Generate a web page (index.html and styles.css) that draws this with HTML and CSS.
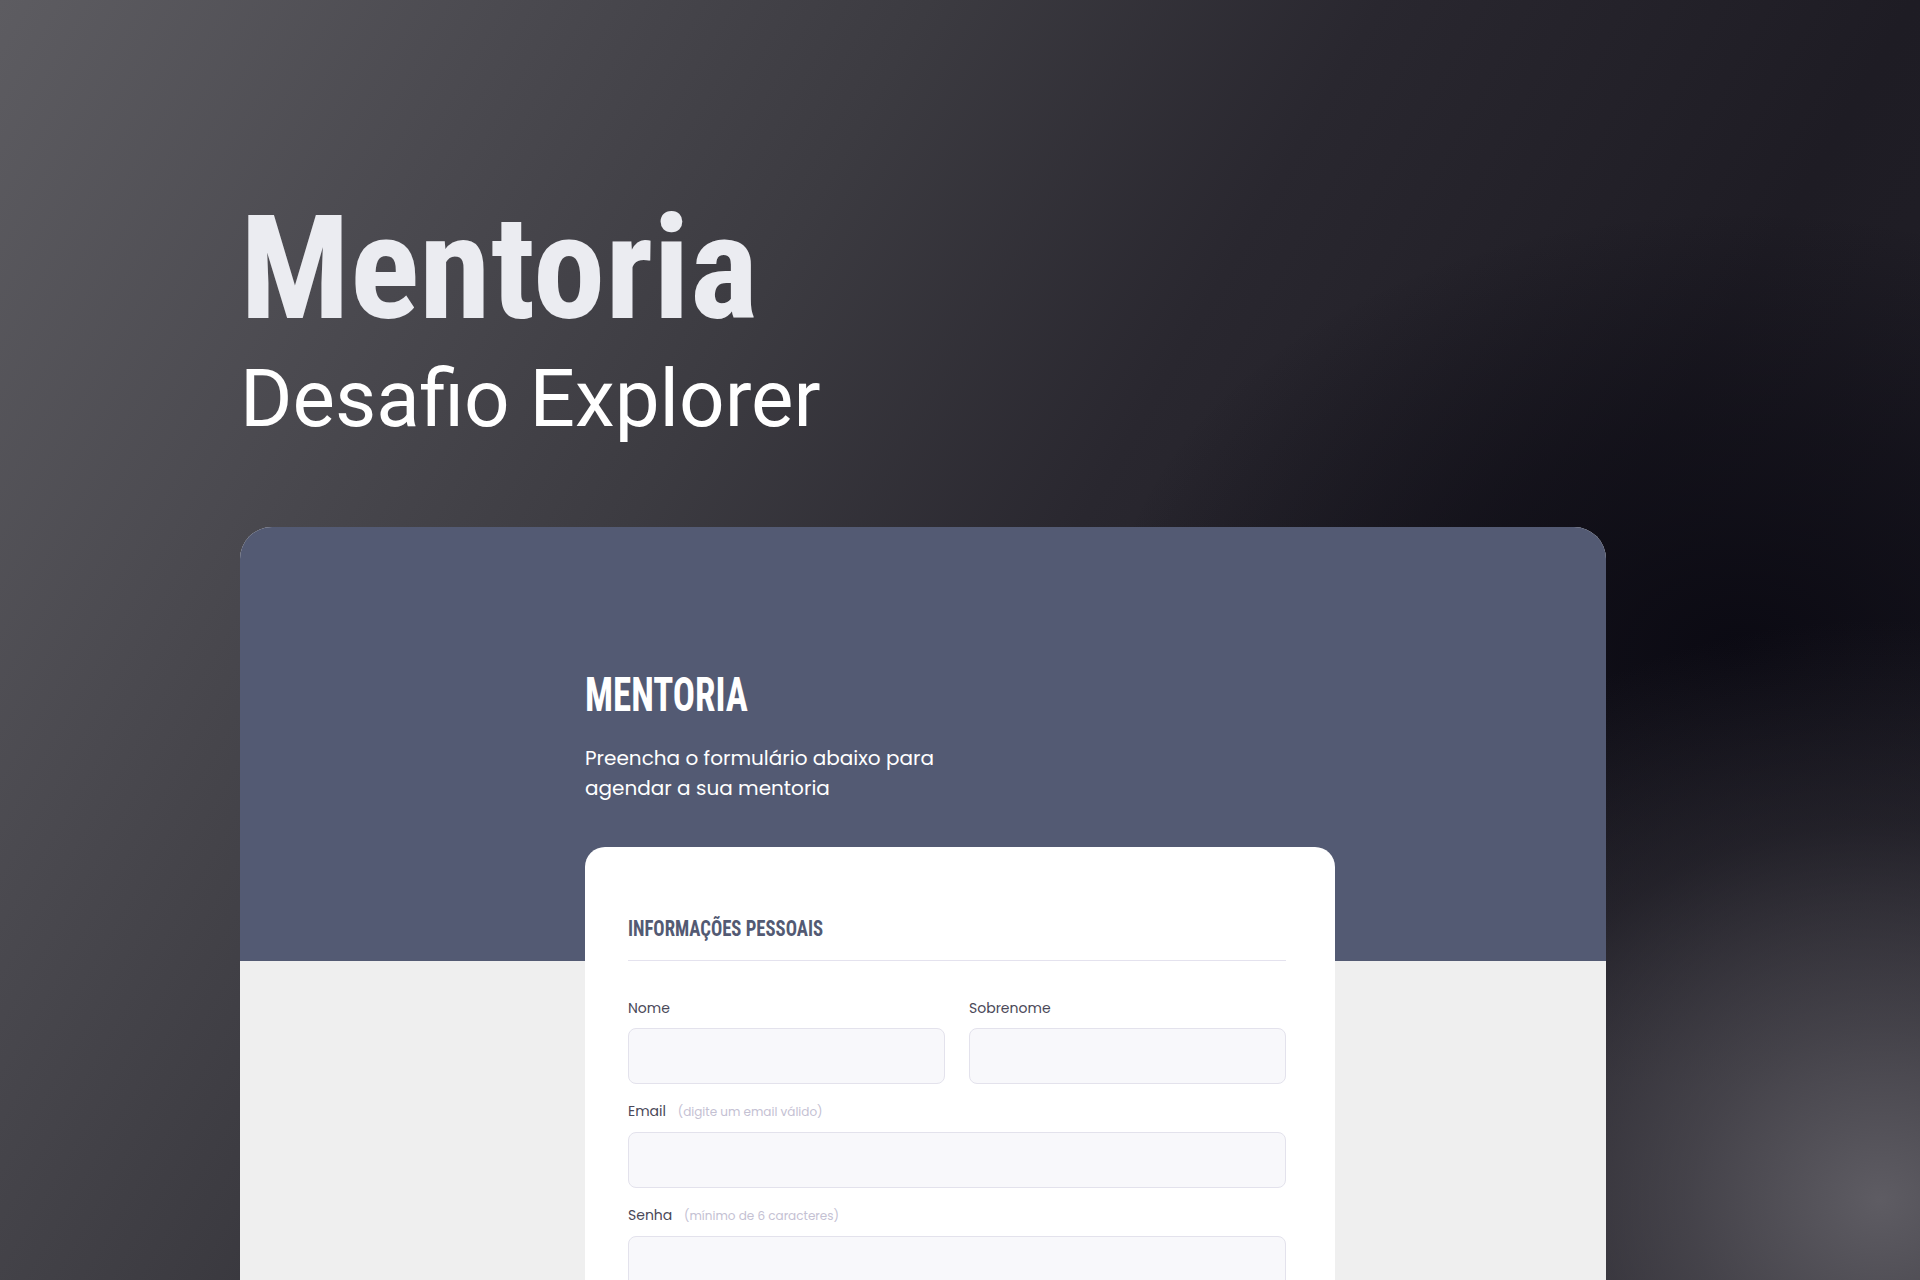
FILE: index.html
```html
<!DOCTYPE html>
<html lang="pt-BR">
<head>
<meta charset="utf-8">
<title>Mentoria - Desafio Explorer</title>
<link rel="stylesheet" href="styles.css">
</head>
<body>
<main class="stage">
  <header class="hero">
    <h1 class="hero-title">Mentoria</h1>
    <p class="hero-sub">Desafio Explorer</p>
  </header>

  <section class="frame">
    <div class="frame-top">
      <div class="intro">
        <h2 class="brand"><span class="squeeze">MENTORIA</span></h2>
        <p class="lead">Preencha o formulário abaixo para<br>agendar a sua mentoria</p>
      </div>
    </div>
    <div class="frame-bottom">
      <form class="form-card">
        <h3 class="section-title"><span class="squeeze">INFORMAÇÕES PESSOAIS</span></h3>
        <div class="fields">
          <div class="row two">
            <label class="field">
              <span class="label">Nome</span>
              <span class="input"></span>
            </label>
            <label class="field">
              <span class="label">Sobrenome</span>
              <span class="input"></span>
            </label>
          </div>
          <label class="field">
            <span class="label">Email <small class="hint">(digite um email válido)</small></span>
            <span class="input"></span>
          </label>
          <label class="field">
            <span class="label">Senha <small class="hint">(mínimo de 6 caracteres)</small></span>
            <span class="input"></span>
          </label>
        </div>
      </form>
    </div>
  </section>
</main>
</body>
</html>
```

FILE: styles.css
```css
* { box-sizing: border-box; margin: 0; padding: 0; }

html, body {
  width: 1920px;
  height: 1280px;
  overflow: hidden;
}

body {
  background:
    radial-gradient(ellipse 640px 580px at 1880px 1200px, rgba(94, 92, 99, 1) 0%, rgba(80, 78, 85, 0.75) 30%, rgba(62, 60, 67, 0.35) 65%, rgba(50, 48, 56, 0) 100%),
    radial-gradient(ellipse 640px 440px at 1740px 650px, rgba(10, 9, 18, 0.95) 0%, rgba(10, 9, 18, 0.55) 50%, rgba(10, 9, 18, 0) 100%),
    linear-gradient(120deg, #5d5c61 0%, #4a494f 20%, #3c3b41 35%, #29272f 52%, #1e1c24 72%, #24222a 100%);
  font-family: "Poppins", "Open Sans", sans-serif;
}

.stage {
  padding-left: 240px;
  padding-top: 196px;
}

.hero-title {
  font-family: "Roboto Condensed", "Roboto", sans-serif;
  font-stretch: condensed;
  font-weight: 700;
  font-size: 145px;
  line-height: 1;
  color: #ebecf1;
}

.hero-sub {
  font-family: "Roboto", sans-serif;
  font-weight: 400;
  font-size: 80px;
  line-height: 1;
  color: #ffffff;
  margin-top: 18px;
}

.frame {
  margin-top: 88px;
  width: 1366px;
  height: 760px;
  border-radius: 32px 32px 0 0;
  overflow: hidden;
  background: #efefef;
  display: flex;
  flex-direction: column;
}

.frame-top {
  background: #535a73;
  height: 434px;
  flex: none;
  padding: 144px 0 0 345px;
}

.squeeze {
  display: inline-block;
  transform-origin: left center;
}

.brand {
  font-family: "Roboto Condensed", "Roboto", sans-serif;
  font-stretch: condensed;
  font-weight: 700;
  font-size: 48px;
  line-height: 1;
  color: #ffffff;
  height: 48px;
}

.brand .squeeze { transform: scaleX(0.77); }

.lead {
  margin-top: 24px;
  font-size: 20px;
  line-height: 30px;
  color: #ffffff;
}

.frame-bottom {
  position: relative;
  flex: 1;
}

.form-card {
  position: absolute;
  left: 345px;
  top: -114px;
  width: 750px;
  height: 600px;
  background: #ffffff;
  border-radius: 20px;
  padding: 70px 49px 0 43px;
}

.section-title {
  font-family: "Roboto Condensed", "Roboto", sans-serif;
  font-stretch: condensed;
  font-weight: 700;
  font-size: 22.5px;
  line-height: 1;
  color: #535a73;
  padding-bottom: 20px;
  border-bottom: 1px solid #e4e2ee;
}

.section-title .squeeze { transform: scaleX(0.83); }

.fields {
  display: flex;
  flex-direction: column;
  gap: 17px;
  padding-top: 37px;
}

.row.two {
  display: grid;
  grid-template-columns: 1fr 1fr;
  gap: 24px;
}

.field {
  display: flex;
  flex-direction: column;
  gap: 10px;
}

.label {
  font-size: 14px;
  line-height: 20px;
  color: #4a4858;
}

.hint {
  font-size: 12px;
  color: #c4c1d3;
  margin-left: 8px;
}

.input {
  display: block;
  height: 56px;
  background: #f8f8fb;
  border: 1px solid #e3e2ec;
  border-radius: 8px;
}
```
